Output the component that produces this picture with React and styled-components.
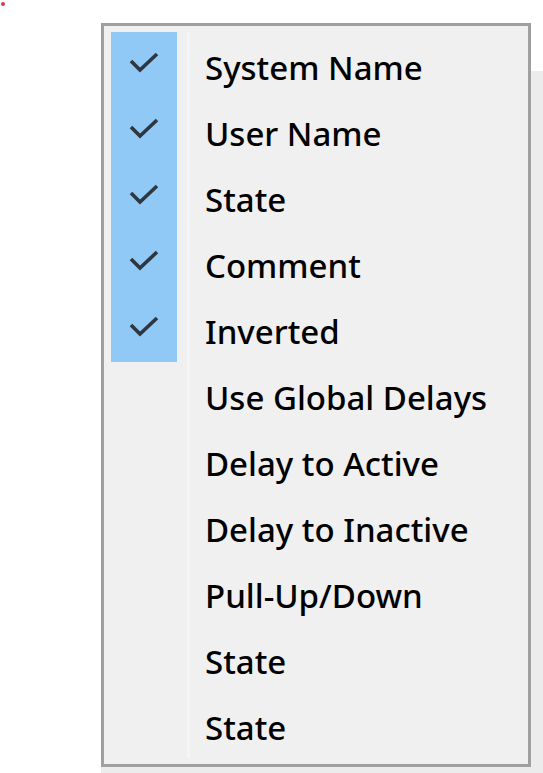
import React from 'react'
import styled, { createGlobalStyle } from 'styled-components'

const items = [
  { label: 'System Name', checked: true },
  { label: 'User Name', checked: true },
  { label: 'State', checked: true },
  { label: 'Comment', checked: true },
  { label: 'Inverted', checked: true },
  { label: 'Use Global Delays' },
  { label: 'Delay to Active' },
  { label: 'Delay to Inactive' },
  { label: 'Pull-Up/Down' },
  { label: 'State' },
  { label: 'State' },
]

const Check = () => (
  <svg width="32" height="24" viewBox="0 0 32 24">
    <path d="M3 10 L12 19 L29 3" fill="none" stroke="#2e3640" strokeWidth="3.6" />
  </svg>
)

const App = () => (
  <>
    <GlobalStyle />
    <Page>
      <Dot />
      <Menu>
        {items.map((item, index) => (
          <Row key={index}>
            <CheckCell checked={item.checked}>{item.checked && <Check />}</CheckCell>
            <Label>{item.label}</Label>
          </Row>
        ))}
      </Menu>
    </Page>
  </>
)

const GlobalStyle = createGlobalStyle`
  body {
    margin: 0;
    background: #fff;
    font-family: "Noto Sans", "DejaVu Sans", sans-serif;
  }
`

const Page = styled.div`
  position: relative;
  width: 543px;
  height: 773px;
  overflow: hidden;
  padding: 23px 0 0 101px;
  box-sizing: border-box;
`

const Dot = styled.div`
  position: absolute;
  left: 1px;
  top: 2px;
  width: 4px;
  height: 4px;
  border-radius: 50%;
  background: #d23c4a;
`

const Menu = styled.div`
  width: 430px;
  box-sizing: border-box;
  border: 3px solid #a0a0a0;
  background: #f0f0f0;
  padding: 6px 0 6px 7px;
  display: flex;
  flex-direction: column;
  box-shadow: 12px 48px 0 #ececec, 0 6px 0 #ececec;
`

const Row = styled.div`
  display: flex;
  align-items: stretch;
  height: 66px;
`

const CheckCell = styled.div`
  width: 66px;
  flex: none;
  display: flex;
  align-items: center;
  justify-content: center;
  padding-bottom: 4px;
  box-sizing: border-box;
  background: ${props => (props.checked ? '#90c8f6' : 'transparent')};
`

const Label = styled.div`
  display: flex;
  align-items: center;
  margin-left: 10px;
  padding: 4px 0 0 15px;
  border-left: 3px solid #f5f5f5;
  font-size: 33px;
  font-weight: 500;
  color: #000;
  white-space: nowrap;
`

export default App
